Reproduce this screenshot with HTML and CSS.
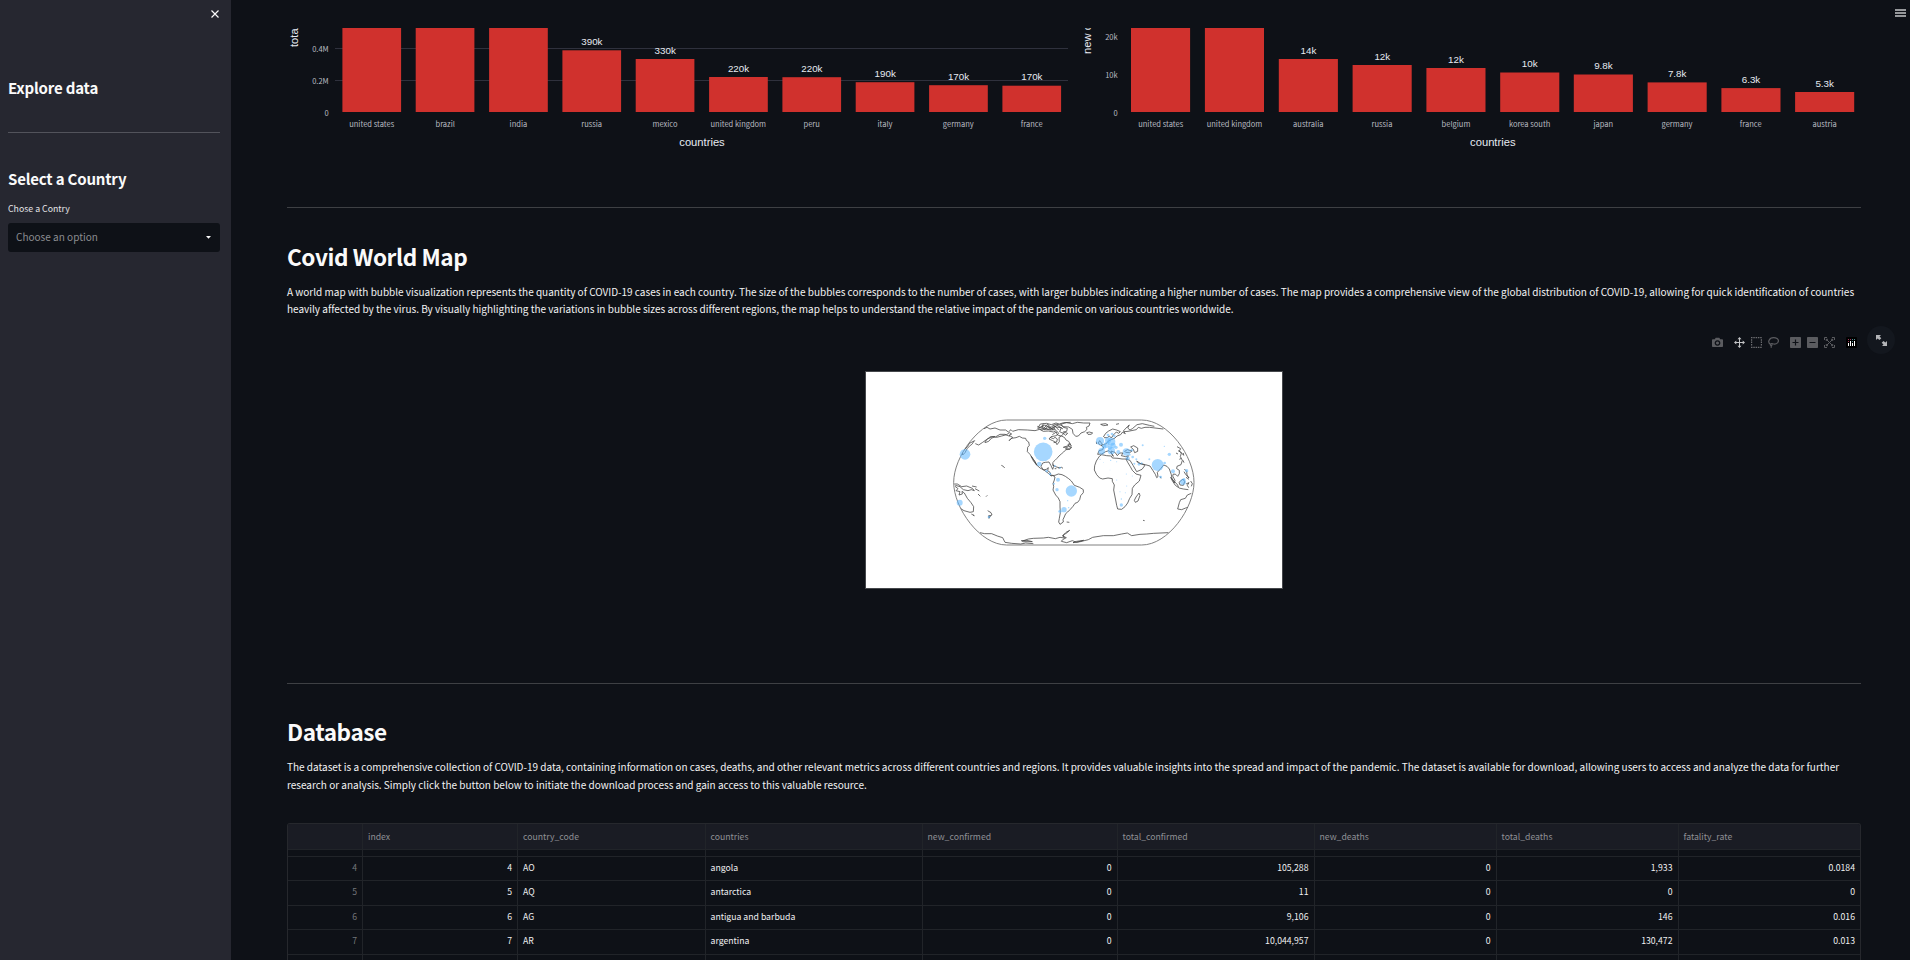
FILE: index.html
```html
<!DOCTYPE html>
<html lang="en">
<head>
<meta charset="utf-8">
<title>Covid dashboard</title>
<link rel="stylesheet" href="styles.css">
</head>
<body>
<div class="app">
  <aside class="sidebar">
    <button class="close" aria-label="Close"><svg width="8" height="8" viewBox="0 0 8 8"><path d="M.5 .5 7.5 7.5M7.5 .5 .5 7.5" stroke="#fafafa" stroke-width="1.2" fill="none"/></svg></button>
    <h3 class="side-title">Explore data</h3>
    <hr class="side-rule">
    <h3 class="side-title">Select a Country</h3>
    <label class="side-label">Chose a Contry</label>
    <div class="select"><span>Choose an option</span><svg width="5" height="3" viewBox="0 0 5 3"><path d="M0 0H5L2.5 2.8Z" fill="#fafafa"/></svg></div>
  </aside>

  <main class="main">
    <button class="menu" aria-label="Menu"><svg width="11" height="8" viewBox="0 0 11 8"><path d="M0 1H11M0 4H11M0 7H11" stroke="#c4c5c7" stroke-width="1.5"/></svg></button>

    <section class="charts">
      <svg class="chart" width="787" height="130" viewBox="287 28 787 130">
        <g class="grid"><path d="M335 48.5H1068M335 80.5H1068"/></g>
        <g class="bars">
          <rect x="342.4" y="20" width="58.7" height="92"/><rect x="415.7" y="20" width="58.7" height="92"/><rect x="489.1" y="20" width="58.7" height="92"/>
          <rect x="562.4" y="50.3" width="58.7" height="61.7"/><rect x="635.7" y="59" width="58.7" height="53"/><rect x="709.1" y="77" width="58.7" height="35"/>
          <rect x="782.4" y="77.2" width="58.7" height="34.8"/><rect x="855.7" y="82.2" width="58.7" height="29.8"/><rect x="929.1" y="85.2" width="58.7" height="26.8"/>
          <rect x="1002.4" y="85.7" width="58.7" height="26.3"/>
        </g>
        <g class="values">
          <text x="591.9" y="45">390k</text><text x="665.2" y="54">330k</text><text x="738.5" y="72">220k</text><text x="811.9" y="72">220k</text><text x="885.2" y="77">190k</text><text x="958.5" y="80">170k</text><text x="1031.9" y="80">170k</text>
        </g>
        <g class="ticks end"><text x="328.7" y="51.5">0.4M</text><text x="328.7" y="83.5">0.2M</text><text x="328.7" y="115.5">0</text></g>
        <g class="ticks">
          <text x="371.7" y="127">united states</text><text x="445.2" y="127">brazil</text><text x="518.4" y="127">india</text><text x="591.7" y="127">russia</text><text x="665" y="127">mexico</text><text x="738.3" y="127">united kingdom</text><text x="811.7" y="127">peru</text><text x="885" y="127">italy</text><text x="958.3" y="127">germany</text><text x="1031.7" y="127">france</text>
        </g>
        <text class="axis" x="702" y="146">countries</text>
        <text class="axis start" transform="translate(298 47) rotate(-90)">tota</text>
      </svg>
      <svg class="chart" width="787" height="130" viewBox="1074 28 787 130">
        <g class="bars">
          <rect x="1131" y="20" width="59.1" height="92"/><rect x="1204.9" y="20" width="59.1" height="92"/><rect x="1278.8" y="59" width="59.1" height="53"/>
          <rect x="1352.6" y="65" width="59.1" height="47"/><rect x="1426.4" y="68" width="59.1" height="44"/><rect x="1500.2" y="72.5" width="59.1" height="39.5"/>
          <rect x="1573.8" y="74.5" width="59.1" height="37.5"/><rect x="1647.6" y="82.4" width="59.1" height="29.6"/><rect x="1721.4" y="88.1" width="59.1" height="23.9"/>
          <rect x="1795.1" y="92" width="59.1" height="20"/>
        </g>
        <g class="values">
          <text x="1308.5" y="54">14k</text><text x="1382.3" y="60">12k</text><text x="1456" y="63">12k</text><text x="1529.7" y="67">10k</text><text x="1603.4" y="69">9.8k</text><text x="1677.2" y="77">7.8k</text><text x="1751" y="83">6.3k</text><text x="1824.7" y="87">5.3k</text>
        </g>
        <g class="ticks end"><text x="1117.7" y="39.5">20k</text><text x="1117.7" y="77.5">10k</text><text x="1117.7" y="115.5">0</text></g>
        <g class="ticks">
          <text x="1160.7" y="127">united states</text><text x="1234.5" y="127">united kingdom</text><text x="1308.3" y="127">australia</text><text x="1382" y="127">russia</text><text x="1456" y="127">belgium</text><text x="1529.6" y="127">korea south</text><text x="1603.3" y="127">japan</text><text x="1677" y="127">germany</text><text x="1750.7" y="127">france</text><text x="1824.6" y="127">austria</text>
        </g>
        <text class="axis" x="1492.8" y="146">countries</text>
        <text class="axis start" transform="translate(1091 54) rotate(-90)">new c</text>
      </svg>
    </section>

    <hr class="rule">

    <h2 class="title">Covid World Map</h2>
    <p class="text map-text">A world map with bubble visualization represents the quantity of COVID-19 cases in each country. The size of the bubbles corresponds to the number of cases, with larger bubbles indicating a higher number of cases. The map provides a comprehensive view of the global distribution of COVID-19, allowing for quick identification of countries<br>heavily affected by the virus. By visually highlighting the variations in bubble sizes across different regions, the map helps to understand the relative impact of the pandemic on various countries worldwide.</p>

    <section class="map-area">
      <div class="toolbar">
        <svg class="tool last-small" width="11" height="11" viewBox="0 0 11 11"><path fill="#5b5c60" fill-rule="evenodd" d="M0 3Q0 2.2 .8 2.2H2.8L3.7 .8H7.3L8.2 2.2H10.2Q11 2.2 11 3V9.2Q11 10 10.2 10H.8Q0 10 0 9.2ZM5.5 3.2a2.8 2.8 0 1 0 .01 0ZM5.5 4.5a1.5 1.5 0 1 1-.01 0Z"/></svg>
        <svg class="tool" width="11" height="11" viewBox="0 0 11 11"><path fill="#c4c5c7" d="M5.5 0 7.5 2.3H6V5H8.7V3.5L11 5.5 8.7 7.5V6H6V8.7H7.5L5.5 11 3.5 8.7H5V6H2.3V7.5L0 5.5 2.3 3.5V5H5V2.3H3.5Z"/></svg>
        <svg class="tool" width="11" height="11" viewBox="0 0 11 11"><path fill="none" stroke="#6b6c70" stroke-width="1.200" stroke-dasharray="1.500 .8" d="M0 .6H11M0 10.400H11M.6 2.300V9M10.400 2.300V9"/></svg>
        <svg class="tool last" width="11" height="11" viewBox="0 0 11 11"><path fill="none" stroke="#5b5c60" stroke-width="1.2" d="M3 7.5C1 6.7.4 5 1 3.4 2 1 5 .4 7.500 .8 10 1.400 11 3.400 10 5.300 8.800 7.300 6 7.200 4.400 6.700 2.800 6.300 1.800 7.200 2.500 8.200 3.200 8.900 4.300 8.300 4.100 7.300M3 8.500Q3.500 9.500 3 10.800"/></svg>
        <svg class="tool" width="11" height="11" viewBox="0 0 11 11"><path fill="#5b5c60" fill-rule="evenodd" d="M.8 0H10.2Q11 0 11 .8V10.200Q11 11 10.200 11H.8Q0 11 0 10.200V.8Q0 0 .8 0ZM4.900 2.500V4.900H2.500V6.100H4.900V8.500H6.100V6.100H8.500V4.900H6.100V2.500Z"/></svg>
        <svg class="tool" width="11" height="11" viewBox="0 0 11 11"><path fill="#5b5c60" fill-rule="evenodd" d="M.8 0H10.2Q11 0 11 .8V10.200Q11 11 10.200 11H.8Q0 11 0 10.200V.8Q0 0 .8 0ZM2.500 4.900V6.100H8.500V4.900Z"/></svg>
        <svg class="tool last" width="11" height="11" viewBox="0 0 11 11"><path fill="none" stroke="#5b5c60" stroke-width="1" d="M.5 3V.5H3M8 .5H10.500V3M10.500 8V10.500H8M3 10.500H.5V8M2.300 2.300 8.700 8.700M8.700 2.300 2.300 8.700M2.300 4V2.300H4M7 2.300H8.700V4M8.700 7V8.700H7M4 8.700H2.300V7"/></svg>
        <svg class="tool" width="11" height="11" viewBox="0 0 11 11"><rect width="11" height="11" rx="1" fill="#000"/><path stroke="#fff" d="M2.500 6V9M4.500 4V9M6.500 6V9M8.500 4V9"/><path stroke="#a3365a" d="M2 2.500H3M4 2.500H5M2 4.500H3"/><path stroke="#4a8f92" d="M6 2.500H7M8 2.500H9M6 4.500H7"/></svg>
        <span class="expand"><svg width="11" height="11" viewBox="0 0 11 11"><path fill="#b4b5b8" d="M0 0H5L3.500 1.500 5.300 3.300 3.500 5.100 1.600 3.400 0 5ZM11 11H6L7.500 9.500 5.700 7.700 7.500 5.900 9.400 7.600 11 6Z"/></svg></span>
      </div>
      <svg class="map" width="418" height="218" viewBox="45 33 1254 654">
        <rect x="45" y="33" width="1254" height="654" fill="#45474b"/>
        <rect x="48" y="36" width="1248" height="648" fill="#fff"/>
        <defs><clipPath id="globe"><path d="M200 29H605C685 29 762 140 762 217S685 405 605 405H200C120 405 41 294 41 217S120 29 200 29Z"/></clipPath></defs>
        <g transform="translate(270 150)">
          <path class="globe" d="M200 30H605C685 30 762 140 762 217S685 405 605 405H200C120 405 41 294 41 217S120 30 200 30Z"/>
          <g class="coast" clip-path="url(#globe)">
            <path d="M132 56 141 52 150 57 165 54 180 60 197 60 205 66 213 59 218 64 235 59 262 60 285 62 299 58 310 64 325 63 340 66 349 62 356 70 349 77 333 80 327 87 338 92 347 97 351 104 358 95 357 82 365 78 374 83 378 90 386 94 391 103 382 108 370 112 383 111 376 117 386 116 395 111 390 118 378 119 371 126 365 131 357 138 351 145 345 151 338 158 341 169 338 178 333 167 327 156 316 157 308 159 303 169 310 180 319 178 325 173 323 182 330 187 334 197 345 196 355 192 366 194 376 199 386 206 394 213 403 226 419 232 430 239 430 248 422 257 419 269 413 277 405 280 399 289 391 298 383 306 377 311 374 318 369 329 370 336 360 343 356 336 358 325 361 308 360 291 360 275 355 264 347 255 339 240 341 229 339 221 343 210 345 201 338 196 333 198 325 190 312 180 300 174 289 164 284 154 276 143 270 133 262 125 263 112 268 106 266 96 259 91 257 85 247 84 238 79 228 83 214 85 207 92 218 82 207 76 215 72 208 68 200 74 185 78 170 82 158 80 142 87 128 97 116 105 106 101"/>
            <path d="M104 92C98 96 99 103 91 106L82 115 75 128 68 135 67 127 74 118 83 109 88 100ZM134 97 139 90 151 80 165 80 154 85 146 94 135 98M166 81 180 73 195 73 209 79"/>
            <path d="M274 139 281 149 288 160 291 166 284 158 278 149ZM337 74 349 66 352 75 364 78 371 71 359 65 364 53 349 51 338 46 350 43 366 46 370 52 382 55 380 64 370 66 383 70 377 76 368 68M302 50 315 45 327 53 338 50 346 59 330 60 318 55 306 60 293 55 301 42 320 40 334 44 348 39 358 42 371 38 392 37M297 53 309 50 320 59 339 55M310 41 306 52 315 60 324 47 331 58 345 48 356 60M292 49 310 57 323 42 338 60 350 45 369 57M330 82 340 86 345 82 352 87 350 96 341 98M384 103 390 101 394 108 386 110Z"/>
            <path d="M362 43 379 38 397 41 412 37 431 39 450 39 447 48 439 52 441 58 434 65 423 69 415 78 407 79 399 70 397 58 386 51 369 50ZM440 68 448 66 458 69 453 73 444 73ZM482 43 497 41 504 45 491 47ZM528 43 537 41M336 164 347 170 359 174M355 174 365 172 369 175M344 176 349 176M184 166 190 169 194 174"/>
            <path d="M552 65 564 64 579 61 589 59 595 52 604 55 615 52 629 52 645 54 670 57M548 67 556 71 550 63 563 49 568 45 563 54 570 60 577 56 591 44 607 41 628 46 643 49"/>
            <path d="M490 81 497 70 506 63 518 57 530 60 541 65 536 70 529 66 520 75 514 84 508 78 502 83 492 83M548 66 542 74 531 78 525 84 514 89 505 93 499 101 491 104 482 105 491 111 488 119 477 122 473 133 485 132 497 125 507 122 516 132 520 139 515 131 513 123 525 127 532 137 539 129 549 129 544 137 557 140 565 137 561 147 546 147 534 145 517 144 514 138 500 137 485 134 478 139 469 153 464 167 463 180 470 194 479 204 488 207 504 204 517 206 517 214 523 225 521 240 524 255 527 270 530 286 533 297 545 298 555 290 563 279 569 265 576 254 577 235 584 225 598 213 603 196 588 192 577 181 571 170 563 157 558 147 570 151 579 166 590 185 606 178 615 166 606 162 596 160 590 153 602 161 616 164 630 168 639 182 646 193 650 203 654 200 652 187 662 176 671 165 681 169 688 177 694 194 696 207 703 219 705 211 698 198 700 192 707 193 713 199 718 191 718 181 710 176 711 169 723 164 727 151 721 140 724 129 718 123 722 116 711 110"/>
            <path d="M480 106 475 99 479 92 487 103M470 102 469 95M572 111 581 107 593 114 593 124 584 128 580 118ZM554 124 562 119 576 123 569 128 557 127ZM597 249 600 256 594 273 586 277 583 271 588 261ZM660 199 663 205M729 151 732 158M718 148 724 145M714 122 722 126 731 136 730 129M708 129 714 132"/>
            <path d="M692 202 703 214 713 225 716 233 706 226 698 214ZM717 234 730 237 745 239M717 217 729 207 734 215 730 226 720 225ZM733 177 740 184 741 195 747 204 737 193 732 185M738 202 747 208M738 222 747 218 742 226 746 233M752 213 757 221 754 229M754 250 742 255 736 265 722 269 718 278 713 297 725 299 737 294 748 291"/>
            <path d="M43 222 52 222 65 230 80 228 97 235 103 242 94 239 84 242 70 239 60 230 46 226M45 229 54 236 48 242 60 245 57 255 67 252 66 244 73 249 82 265 93 278 101 290 100 305 90 307 72 302 58 293 48 292M94 312 103 317 99 315M96 228 110 231M105 236 118 243M114 252 121 259M138 260 142 256M143 302 153 308 156 315 148 318M146 317 151 318 147 325ZM609 331 614 332M380 336 388 337"/>
            <path d="M120 368 134 371 155 371 172 378 188 383 195 397 215 400 242 402 257 399 280 401M244 392 261 391 277 395 250 395ZM248 393 265 387 280 385 310 384 325 382 346 386 360 382 373 384 370 375 380 369 389 361 378 367 367 378 379 383 368 389 364 394 380 398 397 392 410 397 431 391 410 394 399 398 421 395 445 389 458 382 490 377 520 377 545 372 562 369 575 377 600 373 620 372 641 370 685 368"/>
          </g>
          <g class="bubbles">
            <circle cx="309.500" cy="125.500" r="28"/><circle cx="394" cy="243" r="17"/><circle cx="653" cy="165" r="18"/><circle cx="75" cy="133" r="16"/><circle cx="59" cy="278" r="9"/>
            <circle cx="298" cy="162" r="7"/><circle cx="314" cy="85" r="5"/><circle cx="354" cy="209" r="6"/><circle cx="351" cy="239" r="5"/><circle cx="372" cy="299" r="8"/><circle cx="360" cy="304" r="5"/><circle cx="383" cy="272" r="2"/><circle cx="386" cy="293" r="2"/>
            <circle cx="320" cy="183" r="4"/><circle cx="330" cy="192" r="4"/><circle cx="345" cy="168" r="3"/><circle cx="360" cy="173" r="3"/><circle cx="342" cy="221" r="3"/>
            <circle cx="480" cy="93" r="12"/><circle cx="485" cy="124" r="10"/><circle cx="514" cy="122" r="11"/><circle cx="514" cy="95" r="12"/><circle cx="500" cy="105" r="9"/><circle cx="504" cy="91" r="9"/><circle cx="519" cy="106" r="8"/><circle cx="492" cy="110" r="7"/><circle cx="528" cy="112" r="5"/><circle cx="510" cy="113" r="6"/><circle cx="504" cy="75" r="4"/><circle cx="516" cy="72" r="4"/><circle cx="523" cy="78" r="4"/><circle cx="543" cy="104" r="6"/><circle cx="535" cy="126" r="6"/><circle cx="559" cy="126" r="11"/><circle cx="563" cy="145" r="6"/><circle cx="578" cy="141" r="4"/><circle cx="569" cy="134" r="3"/><circle cx="583" cy="161" r="3"/><circle cx="597" cy="163" r="4"/><circle cx="605" cy="160" r="3"/><circle cx="589" cy="148" r="3"/><circle cx="575" cy="121" r="4"/>
            <circle cx="544" cy="285" r="5"/><circle cx="544" cy="267" r="2"/><circle cx="480" cy="148" r="2"/><circle cx="490" cy="158" r="1"/><circle cx="512" cy="151" r="2"/><circle cx="530" cy="155" r="1.500"/><circle cx="530" cy="210" r="1.500"/><circle cx="559" cy="192" r="1.500"/><circle cx="577" cy="198" r="1.500"/><circle cx="540" cy="245" r="1.500"/><circle cx="560" cy="228" r="1.500"/><circle cx="556" cy="248" r="1.500"/><circle cx="510" cy="180" r="1"/>
            <circle cx="608" cy="106" r="3"/><circle cx="673" cy="109" r="2"/><circle cx="688" cy="133" r="5"/><circle cx="628" cy="148" r="3"/><circle cx="674" cy="159" r="4"/><circle cx="662" cy="201" r="4"/><circle cx="699" cy="184" r="6"/><circle cx="729" cy="216" r="9"/><circle cx="732" cy="208" r="4"/><circle cx="740" cy="182" r="5"/><circle cx="147" cy="321" r="4"/>
          </g>
        </g>
      </svg>
    </section>

    <hr class="rule">

    <h2 class="title data-title">Database</h2>
    <p class="text data-text">The dataset is a comprehensive collection of COVID-19 data, containing information on cases, deaths, and other relevant metrics across different countries and regions. It provides valuable insights into the spread and impact of the pandemic. The dataset is available for download, allowing users to access and analyze the data for further<br>research or analysis. Simply click the button below to initiate the download process and gain access to this valuable resource.</p>

    <div class="table">
      <div class="row head"><span></span><span>index</span><span>country_code</span><span>countries</span><span>new_confirmed</span><span>total_confirmed</span><span>new_deaths</span><span>total_deaths</span><span>fatality_rate</span></div>
      <div class="row stub"><span></span><span></span><span></span><span></span><span></span><span></span><span></span><span></span><span></span></div>
      <div class="row"><span class="id">4</span><span class="n">4</span><span>AO</span><span>angola</span><span class="n">0</span><span class="n">105,288</span><span class="n">0</span><span class="n">1,933</span><span class="n">0.0184</span></div>
      <div class="row tall"><span class="id">5</span><span class="n">5</span><span>AQ</span><span>antarctica</span><span class="n">0</span><span class="n">11</span><span class="n">0</span><span class="n">0</span><span class="n">0</span></div>
      <div class="row"><span class="id">6</span><span class="n">6</span><span>AG</span><span>antigua and barbuda</span><span class="n">0</span><span class="n">9,106</span><span class="n">0</span><span class="n">146</span><span class="n">0.016</span></div>
      <div class="row tall"><span class="id">7</span><span class="n">7</span><span>AR</span><span>argentina</span><span class="n">0</span><span class="n">10,044,957</span><span class="n">0</span><span class="n">130,472</span><span class="n">0.013</span></div>
      <div class="row stub"><span></span><span></span><span></span><span></span><span></span><span></span><span></span><span></span><span></span></div>
    </div>
  </main>
</div>
</body>
</html>
```
FILE: styles.css
```css
* { box-sizing: border-box; }
body { margin: 0; height: 960px; overflow: hidden; background: #0e1117; color: #fafafa; font-family: "Noto Sans CJK SC", "Noto Sans", sans-serif; font-size: 10px; }
svg { display: block; flex: none; }
h2, h3, p, hr { margin: 0; }
button { border: 0; padding: 0; background: none; }
.app { display: flex; height: 960px; }

.sidebar { width: 231px; flex: none; background: #262730; padding: 10px 11px 0 8px; display: flex; flex-direction: column; }
.close { align-self: flex-end; margin-right: 1px; height: 8px; }
.side-title { font-size: 15.04px; font-weight: 600; letter-spacing: -.2px; line-height: 20px; margin-top: 60px; height: 20px; white-space: nowrap; }
.side-rule { border: 0; height: 1px; background: #52535b; margin-top: 34px; }
.side-rule + .side-title { margin-top: 36px; }
.side-label { font-size: 8.78px; line-height: 14px; margin-top: 13px; color: #e4e4e6; }
.select { height: 29px; margin-top: 7px; border-radius: 3px; background: #0e1117; padding: 0 9px 0 8px; display: flex; align-items: center; justify-content: space-between; font-size: 10.03px; line-height: 16px; color: #8b8c90; }
.select span { margin-bottom: 2px; }

.main { position: relative; flex: 1; min-width: 0; height: 960px; overflow: hidden; padding: 28px 49px 0 56px; }
.menu { position: absolute; right: 4px; top: 9px; }
.charts { display: flex; height: 179px; }
.grid path { stroke: #2f313d; fill: none; }
.bars rect { fill: #d0312d; }
.values text { font: 9.8px "Liberation Sans", Arial, sans-serif; fill: #e6eaf1; text-anchor: middle; }
.ticks text { font-size: 7.52px; fill: #b9bbc1; text-anchor: middle; }
.ticks.end text { text-anchor: end; }
.axis { font: 11.2px "Liberation Sans", Arial, sans-serif; fill: #e6eaf1; text-anchor: middle; }
.axis.start { text-anchor: start; }

.rule { border: 0; height: 1px; background: #3e4044; }
.title { font-size: 22.56px; font-weight: 600; letter-spacing: -.42px; line-height: 30px; height: 30px; white-space: nowrap; margin-top: 33px; }
.data-title { margin-top: 32px; }
.text { font-size: 10.03px; letter-spacing: -.011px; white-space: nowrap; color: #f2f2f3; }
.map-text { line-height: 17px; height: 34px; margin-top: 12px; }
.data-text { line-height: 18px; height: 36px; margin-top: 12px; }

.map-area { height: 366px; padding-top: 9px; }
.toolbar { height: 28px; display: flex; align-items: center; justify-content: flex-end; gap: 6px; margin: 0 -34px 0 0; }
.tool { margin-top: 4px; }
.tool.last, .tool.last-small { margin-right: 5px; }
.expand { width: 28px; height: 28px; margin-left: 4px; border-radius: 50%; background: #13171e; display: grid; place-items: center; }
.map { margin: 17px auto 0; }
.globe { fill: none; stroke: #777; stroke-width: 2.8; }
.coast path { fill: none; stroke: #444; stroke-width: 2.3; stroke-linejoin: round; }
.bubbles circle { fill: #63b9ff; fill-opacity: .57; }

.table { margin-top: 29px; height: 150px; border: 1px solid #26282d; border-bottom: 0; border-radius: 3px 3px 0 0; overflow: hidden; font-size: 8.7px; color: #f0f0f1; }
.row { display: grid; grid-template-columns: 75px 155px 187.500px 217px 195px 197px 182px 182px 1fr; height: 24px; }
.row span { border-right: 1px solid #212429; border-bottom: 1px solid #212429; padding: 0 5px; line-height: 22px; white-space: nowrap; }
.row span:last-child { border-right: 0; }
.row.tall { height: 25px; }
.row.head { height: 26px; background: #1a1c24; color: #8f9095; }
.row.head span { line-height: 25px; }
.row.stub { height: 7px; }
.row .n { text-align: right; }
.row .id { text-align: right; color: #75777b; }
```
